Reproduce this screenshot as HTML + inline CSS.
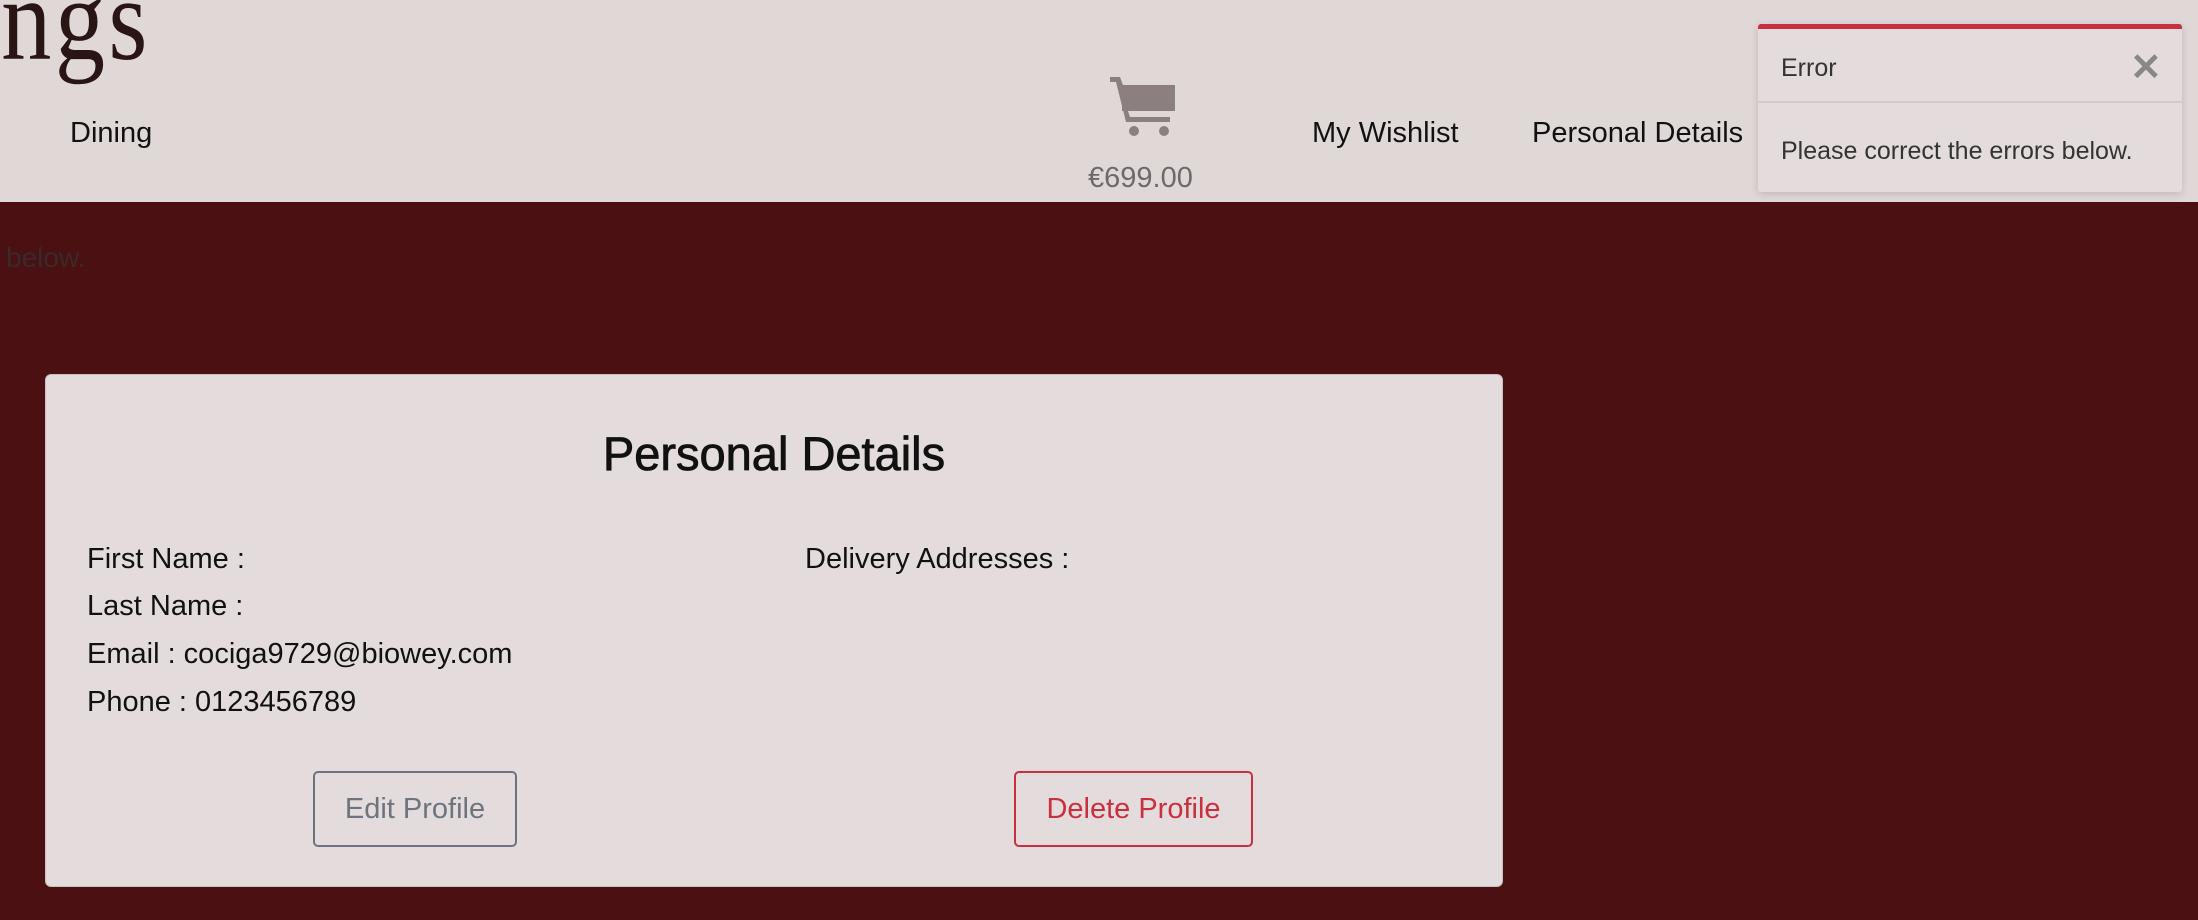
<!DOCTYPE html>
<html><head><meta charset="utf-8"><style>
*{margin:0;padding:0;box-sizing:border-box}
body{width:2198px;height:920px;overflow:hidden;background:#4a1012;font-family:"Liberation Sans",sans-serif;position:relative}
.hdr{position:absolute;left:0;top:0;width:2198px;height:202px;background:#e0d8d7}
.a{position:absolute;white-space:nowrap}
.nav{font-size:29px;color:#111;top:117px}
.toast{position:absolute;left:1758px;top:24px;width:424px;height:168px;background:#e4dcdc;border-top:5px solid #c8303f;box-shadow:0 2px 8px rgba(0,0,0,.15);border-radius:3px}
.card{position:absolute;left:45px;top:374px;width:1458px;height:513px;background:#e4dcdc;border:1px solid #c9bfbf;border-radius:6px}
.lbl{font-size:29px;color:#111;left:41px}
.btn{position:absolute;top:396px;height:76px;border:2px solid;border-radius:5px;font-size:29px;display:flex;align-items:center;justify-content:center;background:transparent}
</style></head><body>
<div class="hdr">
<div class="a" style="left:-30px;top:-48px;font-family:'Liberation Serif',serif;font-size:118px;color:#2a1515;letter-spacing:4px;transform:scaleX(0.85);transform-origin:left top">ings</div>
<div class="a nav" style="left:70px">Dining</div>
<svg class="a" style="left:1108px;top:73px" width="72" height="64" viewBox="0 0 72 64"><path d="M2 4h10l3 8h52l-5 26H20l2 6h40v5H18L8 9H2z" fill="#8c7f7f"/><rect x="14" y="12" width="53" height="26" fill="#8c7f7f"/><circle cx="26" cy="58" r="5" fill="#8c7f7f"/><circle cx="56" cy="58" r="5" fill="#8c7f7f"/></svg>
<div class="a" style="left:1088px;top:162px;font-size:29px;color:#6c6a6c">€699.00</div>
<div class="a nav" style="left:1312px">My Wishlist</div>
<div class="a nav" style="left:1532px">Personal Details</div>
</div>
<div class="toast">
<div class="a" style="left:23px;top:25px;font-size:25px;color:#333">Error</div>
<div class="a" style="left:372px;top:16px;font-size:38px;color:#888;font-weight:bold">✕</div>
<div style="position:absolute;left:0;top:72px;width:100%;height:2px;background:#d2c9c9"></div>
<div class="a" style="left:23px;top:108px;font-size:25px;color:#333">Please correct the errors below.</div>
</div>
<div class="a" style="left:6px;top:242px;font-size:28px;color:#3a2a2a">below.</div>
<div class="card">
<div class="a" style="left:0;width:100%;text-align:center;top:51px;font-size:47px;color:#111;-webkit-text-stroke:0.8px #111">Personal Details</div>
<div class="a lbl" style="top:168px">First Name :</div>
<div class="a lbl" style="top:215px">Last Name :</div>
<div class="a lbl" style="top:263px">Email : cociga9729@biowey.com</div>
<div class="a lbl" style="top:311px">Phone : 0123456789</div>
<div class="a lbl" style="left:759px;top:168px">Delivery Addresses :</div>
<div class="btn" style="left:267px;width:204px;border-color:#6c757d;color:#6c757d">Edit Profile</div>
<div class="btn" style="left:968px;width:239px;border-color:#c8303f;color:#c8303f">Delete Profile</div>
</div>
</body></html>
